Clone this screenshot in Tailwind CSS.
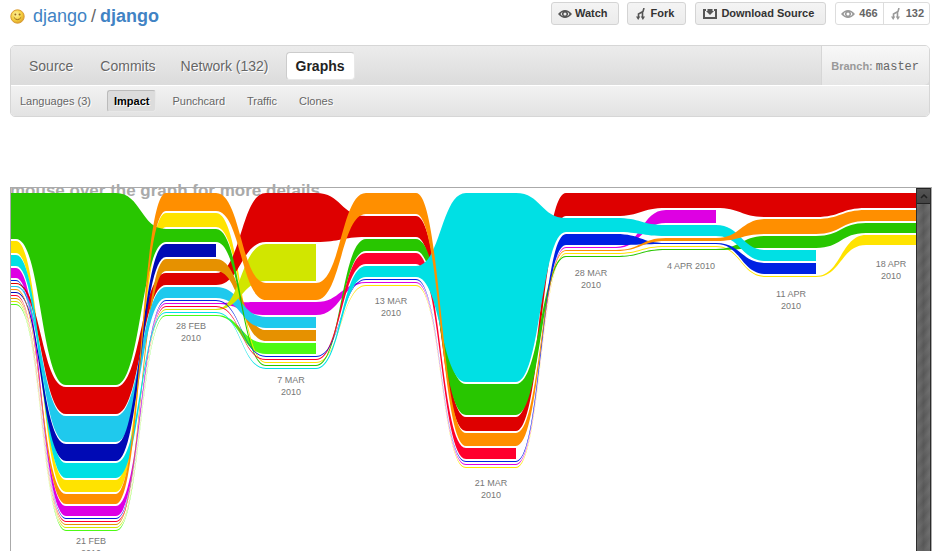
<!DOCTYPE html>
<html lang="en">
<head>
<meta charset="utf-8">
<title>Impact · django/django</title>
<script src="https://cdn.jsdelivr.net/npm/@tailwindcss/browser@4"></script>
</head>
<body class="bg-white font-['Liberation_Sans',Arial,sans-serif] text-[#666]">
<svg class="hidden" aria-hidden="true">
  <symbol id="eye" viewBox="0 0 14 10"><path fill="currentColor" fill-rule="evenodd" d="M0 5Q3.500 1 7 1T14 5Q10.500 9 7 9T0 5ZM2.500 5Q3.600 6.700 5 7.200A3 3 0 0 1 5 2.800Q3.600 3.300 2.500 5ZM11.500 5Q10.400 3.300 9 2.800A3 3 0 0 1 9 7.200Q10.400 6.700 11.500 5ZM7 3.500A1.500 1.500 0 1 0 7 6.500A1.500 1.500 0 1 0 7 3.500Z"/></symbol>
  <symbol id="fork" viewBox="0 0 10 12"><path fill="none" stroke="currentColor" stroke-width="1.600" d="M8 0L7 3.500L2.500 6V9M6.500 4V9"/><path fill="currentColor" d="M0 8.500H4.300L2.200 12ZM4.800 8.500H9L6.900 12Z"/></symbol>
  <symbol id="download" viewBox="0 0 14 10"><path fill="none" stroke="currentColor" stroke-width="2" d="M3 1H1V9H13V1H11"/><path fill="currentColor" d="M4.500 0H9.500V2H11L7 6L3 2H4.500Z"/></symbol>
</svg>
<div class="flex h-screen flex-col overflow-hidden pr-5 pl-[10px]">
  <header class="flex items-start pt-[2px]">
    <h1 class="flex h-7 grow items-center text-lg leading-7 text-[#4183c4]">
      <svg class="mr-2 size-[15px]" viewBox="0 0 15 15" aria-hidden="true">
        <defs><radialGradient id="gold" cx=".4" cy=".35" r=".7"><stop offset="0" stop-color="#fff3a0"/><stop offset=".6" stop-color="#f5cf3c"/><stop offset="1" stop-color="#d99d2b"/></radialGradient></defs>
        <circle cx="7.500" cy="7.500" r="6.700" fill="url(#gold)" stroke="#d99b35"/>
        <circle cx="5.400" cy="5.600" r="1" fill="#9b6b1d"/><circle cx="9.600" cy="5.600" r="1" fill="#9b6b1d"/>
        <path d="M3.800 8.300Q7.500 13 11.200 8.300" fill="none" stroke="#9b6b1d"/>
      </svg>
      <a href="#">django</a><span class="px-1 text-[#666]">/</span><a href="#" class="font-bold">django</a>
    </h1>
    <div class="flex text-[11px] leading-[21px] font-bold text-[#333]">
      <button class="mr-2 flex items-center gap-[3px] rounded-[3px] border border-[#d4d4d4] bg-linear-to-b from-[#f4f4f4] to-[#ececec] pr-[10px] pl-[6px]"><svg class="h-[10px] w-[14px] text-[#555]"><use href="#eye"/></svg>Watch</button>
      <button class="mr-[9px] flex items-center gap-[5px] rounded-[3px] border border-[#d4d4d4] bg-linear-to-b from-[#f4f4f4] to-[#ececec] pr-[11px] pl-2"><svg class="h-3 w-[10px] text-[#555]"><use href="#fork"/></svg>Fork</button>
      <button class="mr-[9px] flex items-center gap-[4px] rounded-[3px] border border-[#d4d4d4] bg-linear-to-b from-[#f4f4f4] to-[#ececec] pr-[11px] pl-[7px]"><svg class="h-[10px] w-[14px] text-[#555]"><use href="#download"/></svg>Download Source</button>
      <div class="flex rounded-[3px] border border-[#ddd] text-[#666]">
        <a href="#" class="flex items-center gap-[4px] border-r border-[#ddd] px-[5px]" aria-label="466 watchers"><svg class="h-[10px] w-[14px] text-[#999]"><use href="#eye"/></svg>466</a>
        <a href="#" class="flex items-center gap-[5px] pr-[5px] pl-[7px]" aria-label="132 forks"><svg class="h-3 w-[10px] text-[#999]"><use href="#fork"/></svg>132</a>
      </div>
    </div>
  </header>

  <nav class="mt-[15px] shrink-0 overflow-hidden rounded-[5px] border border-[#d6d6d6]">
    <div class="flex h-10 items-center border-b border-white bg-linear-to-b from-[#ececec] to-[#dbdbdb] pl-[18px] text-sm [text-shadow:1px_1px_0_#fff]">
      <a href="#" class="mr-[27px]">Source</a>
      <a href="#" class="mr-[25px]">Commits</a>
      <a href="#" class="mr-[17px]">Network (132)</a>
      <a href="#" aria-current="page" class="rounded-[4px] border border-r-[#e8e8e8] border-b-[#e8e8e8] border-t-[#ccc] border-l-[#ccc] bg-white px-[9px] leading-[26px] font-bold text-[#222]">Graphs</a>
      <button class="ml-auto flex h-full items-center gap-[3px] rounded-br-[5px] border-l border-[#d6d6d6] bg-linear-to-b from-[#f8f8f8] to-[#e6e6e6] pt-[2px] pr-[10px] pl-[9px]"><span class="text-[11px] font-bold text-[#999]">Branch:</span><span class="font-['Liberation_Mono',monospace] text-xs">master</span></button>
    </div>
    <div class="flex h-[30px] items-center bg-linear-to-b from-[#f2f2f2] to-[#e3e3e3] pl-[9px] text-[11px] [text-shadow:1px_1px_0_#fff]">
      <a href="#" class="mr-4">Languages (3)</a>
      <a href="#" aria-current="page" class="mr-4 rounded-[3px] border border-r-[#e8e8e8] border-b-[#e8e8e8] border-t-[#bbb] border-l-[#bbb] bg-[#dcdcdc] px-[6px] leading-5 font-bold text-black">Impact</a>
      <a href="#" class="mr-[22px]">Punchcard</a>
      <a href="#" class="mr-[22px]">Traffic</a>
      <a href="#">Clones</a>
    </div>
  </nav>

  <p class="mt-16 -mb-[14px] text-[17px] leading-5 font-bold text-[#aaa]">mouse over the graph for more details</p>
  <main class="relative -mr-[2px] flex min-h-0 grow border border-b-0 border-[#aaa]">
    <div class="min-w-0 grow overflow-hidden">
      <svg id="impact" class="block h-[375px] w-[905px]" viewBox="11 188 905 375" role="img" aria-label="Impact graph"></svg>
    </div>
    <div class="flex w-[15px] shrink-0 flex-col border-x border-[#2c2c2c] bg-[#666]">
      <button class="flex h-4 items-center justify-center border-y border-[#222] bg-linear-to-b from-[#555] to-[#444]" aria-label="Scroll up"><svg class="h-[5px] w-2" viewBox="0 0 8 5"><path d="M1 4L4 1L7 4" fill="none" stroke="#222" stroke-width="1.500"/></svg></button>
      <div class="grow bg-[linear-gradient(90deg,#7778_0%,#5558_50%,#7778_100%),repeating-linear-gradient(135deg,#6c6c6c_0px,#585858_5px,#6c6c6c_10px)]"></div>
    </div>
  </main>
</div>
<script>
// Each author: colour, then [week, top, bottom] bands, listed back to front.
const authors = [
  ['#4dfa14', [[0,304,305],[1,530,531],[2,315,316],[3,343,354]]],
  ['#ffe300', [[0,241,253],[1,480,492],[2,213,227],[3,362,363],[4,285,286],[5,467,468],[6,253,254],[7,246,247],[8,276,277],[9,235,245]]],
  ['#de00e3', [[0,268,278],[1,506,516],[2,303,304],[3,302,315],[4,282,283],[5,464,465],[6,247,248],[7,210,223]]],
  ['#de0000', [[0,283,284],[1,387,414],[2,273,285],[3,193,242],[4,216,237],[5,417,431],[6,193,216],[7,193,208],[8,193,217],[9,193,208]]],
  ['#e69100', [[0,298,299],[1,524,525],[2,259,271],[3,330,341]]],
  ['#1fc9ed', [[0,286,287],[1,416,442],[2,287,298],[3,317,328]]],
  ['#d1e600', [[0,301,302],[1,527,528],[2,309,310],[3,244,281]]],
  ['#28c600', [[0,193,239],[1,193,385],[2,229,242],[3,365,366],[4,239,251],[5,384,415],[6,256,257],[7,249,250],[8,236,248],[9,223,233]]],
  ['#ff002e', [[0,295,296],[1,521,522],[2,306,307],[3,359,360],[4,253,264],[5,448,459]]],
  ['#0021e3', [[0,280,281],[1,518,519],[2,300,301],[3,356,357],[4,279,280],[5,461,462],[6,234,245],[7,243,244],[8,263,274]]],
  ['#00e0e4', [[0,255,266],[1,463,478],[2,312,313],[3,368,369],[4,266,277],[5,193,382],[6,218,232],[7,225,236],[8,250,261]]],
  ['#000ab5', [[0,292,293],[1,444,461],[2,244,257]]],
  ['#ff8f00', [[0,289,290],[1,494,504],[2,193,211],[3,283,300],[4,193,214],[5,433,446],[6,250,251],[7,238,241],[8,219,234],[9,210,221]]]
];
const labels = [[1,544,'21 FEB','2010'],[2,329,'28 FEB','2010'],[3,383,'7 MAR','2010'],[4,304,'13 MAR','2010'],[5,486,'21 MAR','2010'],[6,276,'28 MAR','2010'],[7,269,'4 APR 2010'],[8,297,'11 APR','2010'],[9,267,'18 APR','2010']];
const left = week => week * 100 - 34;
let markup = '';
for (const [colour, bands] of authors) {
  let d = '';
  bands.forEach(([w, top], i) => {
    const x = left(w);
    d += i ? `C${x - 25} ${bands[i - 1][1]} ${x - 25} ${top} ${x} ${top}` : `M${x} ${top}`;
    d += `H${x + 50}`;
  });
  for (let i = bands.length - 1; i >= 0; i--) {
    const x = left(bands[i][0]) + 50, bottom = bands[i][2];
    d += i === bands.length - 1 ? `V${bottom}` : `C${x + 25} ${bands[i + 1][2]} ${x + 25} ${bottom} ${x} ${bottom}`;
    d += `H${x - 50}`;
  }
  markup += `<path fill="${colour}" d="${d}Z"/>`;
}
for (const [w, y, ...lines] of labels)
  lines.forEach((text, i) => markup += `<text class="fill-[#777] text-[9px]" text-anchor="middle" x="${left(w) + 25}" y="${y + i * 12}">${text}</text>`);
document.getElementById('impact').innerHTML = markup;
</script>
</body>
</html>
